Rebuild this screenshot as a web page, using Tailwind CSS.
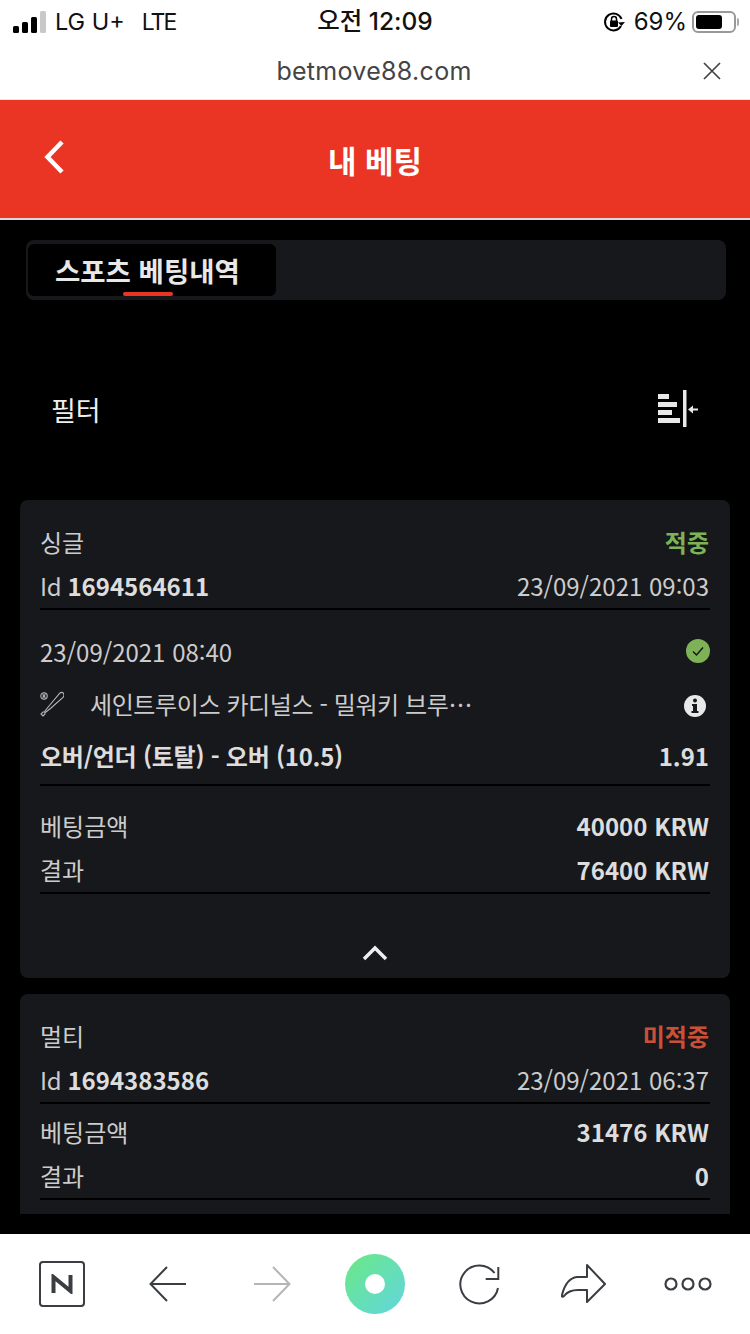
<!DOCTYPE html>
<html lang="ko">
<head>
  <meta charset="UTF-8" />
  <meta name="viewport" content="width=device-width, initial-scale=1.0"/>
  <title>내 베팅</title>
  <script src="https://cdn.jsdelivr.net/npm/@tailwindcss/browser@4"></script>
</head>
<body class="w-[750px] h-[1334px] overflow-hidden bg-black font-['Noto_Sans_CJK_KR','Noto_Sans',sans-serif]">
  <div class="flex flex-col h-[1334px]">

    <!-- Status bar -->
    <div class="h-[44px] bg-white flex items-center justify-between pl-[13px] pr-[11px] font-['Inter','Noto_Sans_CJK_KR',sans-serif] text-[#111] text-[23px]">
      <div class="flex items-center w-[240px]">
        <svg width="34" height="22" viewBox="0 0 34 22" class="mr-[8px]">
          <rect x="0" y="15" width="6" height="7" rx="1.5" fill="#000"/>
          <rect x="9" y="11" width="6" height="11" rx="1.5" fill="#000"/>
          <rect x="18" y="6" width="6" height="16" rx="1.5" fill="#000"/>
          <rect x="27" y="0" width="6" height="22" rx="1.5" fill="#c8c8c8"/>
        </svg>
        <span class="text-[23.5px]">LG U+</span>
        <span class="ml-[17px] tracking-[-2px]">LTE</span>
      </div>
      <div class="font-medium text-[24.5px] -mt-[1px] mr-[2px]">오전 12:09</div>
      <div class="flex items-center justify-end w-[240px]">
        <svg width="22" height="22" viewBox="0 0 22 22" class="mr-[9px]" fill="none">
          <path d="M18 15a8.500 8.500 0 1 1 .5-7" stroke="#000" stroke-width="2"/>
          <path d="M15 11.500l3.500 3.500 3.500-4z" fill="#000"/>
          <rect x="7" y="9.500" width="8" height="6.500" rx="1" fill="#000"/>
          <path d="M8.500 10V8a2.500 2.500 0 0 1 5 0v2" stroke="#000" stroke-width="1.500"/>
        </svg>
        <span class="mr-[5px] text-[24px]">69%</span>
        <div class="w-[44px] h-[22px] rounded-[6px] border-2 border-[#999] p-[2px]">
          <div class="w-[26px] h-full bg-black rounded-[3px]"></div>
        </div>
        <div class="w-[2px] h-[8px] bg-[#aaa] ml-[1px] rounded-r"></div>
      </div>
    </div>

    <!-- Url bar -->
    <div class="h-[56px] bg-white relative flex items-center justify-center pr-[2px] text-[#444] text-[25px] font-['Inter',sans-serif] border-b border-[#e8e8e8]">
      <span class="tracking-[0.3px]">betmove88.com</span>
      <svg width="18" height="18" viewBox="0 0 18 18" class="absolute right-[29px] top-[18px]" stroke="#444" stroke-width="1.700" fill="none"><path d="M1 1l16 16M17 1L1 17"/></svg>
    </div>

    <!-- Header -->
    <div class="h-[120px] bg-[#ea3524] border-b-2 border-[#d8d8d8] relative flex items-center justify-center text-white text-[31px] font-bold">
      <svg width="22" height="34" viewBox="0 0 22 34" class="absolute left-[44px] top-[40px]" fill="none" stroke="#fff" stroke-width="4.500"><path d="M18 2L3.500 17 18 32"/></svg>
      <span class="mt-[3px]">내 베팅</span>
    </div>

    <!-- Content -->
    <div class="flex-1 overflow-hidden bg-black">
      <div class="ml-[26px] w-[700px] mt-[20px] h-[60px] rounded-[8px] bg-[#17181c] p-[2px] pt-[4px]">
        <div class="relative w-[248px] h-[52px] rounded-[6px] bg-black flex items-center pl-[27px] pt-[2px] text-[#e8e8e8] text-[27.500px] font-bold">
          스포츠 베팅내역
          <div class="absolute left-[95px] bottom-0 w-[50px] h-[4px] rounded-sm bg-[#ea3524]"></div>
        </div>
      </div>

      <div class="h-[200px] flex items-center justify-between pt-[21px] pl-[51px] pr-[52px]">
        <span class="text-[#eee] text-[27px]">필터</span>
        <svg width="40" height="38" viewBox="0 0 40 38" class="-mt-[3px]" fill="#e8e8e8">
          <rect x="0" y="4" width="11" height="5"/>
          <rect x="0" y="12" width="19" height="5"/>
          <rect x="0" y="20" width="14" height="5"/>
          <rect x="0" y="28" width="22" height="5"/>
          <rect x="25" y="0" width="3.500" height="37"/>
          <path d="M30 19.500l5-4v3h5v2h-5v3z"/>
        </svg>
      </div>

      <!-- Card 1 -->
      <div class="mx-[20px] h-[478px] rounded-[8px] bg-[#17181c] px-[20px] text-[#ddd] text-[24px]">
        <div class="flex justify-between items-center h-[44px] pt-[20px] pr-[1px] box-content">
          <span class="text-[#ccc]">싱글</span>
          <span class="font-bold text-[#7db356]">적중</span>
        </div>
        <div class="flex justify-between items-center h-[46px] pr-[1px] border-b-2 border-black">
          <span><span class="text-[#ccc] tracking-[-0.4px]">Id </span><b>1694564611</b></span>
          <span class="text-[#ccc]">23/09/2021 09:03</span>
        </div>

        <div class="flex justify-between items-center h-[44px] mt-[20px]">
          <span class="text-[#ccc]">23/09/2021 08:40</span>
          <svg width="24" height="24" viewBox="0 0 24 24" class="-mt-[2px]"><circle cx="12" cy="12" r="12" fill="#7db356"/><path d="M7 12.500l3.500 3.500L17 8.500" fill="none" stroke="#17181c" stroke-width="1.500"/></svg>
        </div>
        <div class="flex justify-between items-center h-[59px]">
          <div class="flex items-center">
            <svg width="24" height="26" viewBox="0 0 24 26" fill="none" stroke="#b8b8b8" stroke-width="1.100">
              <circle cx="4" cy="5" r="3.200"/><path d="M2.800 2.500c.8 1.500.8 3.500 0 5M5.200 2.500c-.8 1.500-.8 3.500 0 5"/>
              <path d="M19.800 2.200C21.200.9 23 1.200 23.500 2.500 24.200 3.800 24 5.400 23 6.400L11 17l-5 4-1 .5V23l-2 2-2-2 2-2h1.500l.5-1 4-5z"/>
            </svg>
            <span class="ml-[26px] text-[#ccc] tracking-[-0.4px] whitespace-nowrap">세인트루이스 카디널스 - 밀워키 브루…</span>
          </div>
          <svg width="22" height="22" viewBox="0 0 22 22" class="mr-[4px] mt-[5px]"><circle cx="11" cy="11" r="11" fill="#e8e8e8"/><circle cx="11" cy="5.500" r="2" fill="#17181c"/><path d="M8 9h5v7h1.500v2h-7v-2H9v-5H8z" fill="#17181c"/></svg>
        </div>
        <div class="flex justify-between items-center h-[46px] pb-[5px] pr-[1px] border-b-2 border-black box-content font-bold">
          <span class="tracking-[-0.25px]">오버/언더 (토탈) - 오버 (10.5)</span>
          <span>1.91</span>
        </div>

        <div class="flex justify-between items-center h-[44px] pr-[1px] mt-[18px]">
          <span class="text-[#ccc]">베팅금액</span>
          <b>40000 KRW</b>
        </div>
        <div class="flex justify-between items-center h-[46px] pb-[1px] pr-[1px] border-b-2 border-black">
          <span class="text-[#ccc]">결과</span>
          <b>76400 KRW</b>
        </div>
        <div class="flex justify-center mt-[51px]">
          <svg width="26" height="16" viewBox="0 0 26 16" fill="none" stroke="#eee" stroke-width="3.500"><path d="M2 14L13 3l11 11"/></svg>
        </div>
      </div>

      <!-- Card 2 -->
      <div class="mx-[20px] mt-[16px] h-[220px] overflow-hidden rounded-t-[8px] bg-[#17181c] px-[20px] text-[#ddd] text-[24px]">
        <div class="flex justify-between items-center h-[44px] pr-[1px] mt-[20px]">
          <span class="text-[#ccc]">멀티</span>
          <span class="font-bold text-[#cc5038]">미적중</span>
        </div>
        <div class="flex justify-between items-center h-[46px] pr-[1px] border-b-2 border-black">
          <span><span class="text-[#ccc] tracking-[-0.4px]">Id </span><b>1694383586</b></span>
          <span class="text-[#ccc]">23/09/2021 06:37</span>
        </div>
        <div class="flex justify-between items-center h-[44px] pr-[1px] mt-[6px]">
          <span class="text-[#ccc]">베팅금액</span>
          <b>31476 KRW</b>
        </div>
        <div class="flex justify-between items-center h-[46px] pr-[1px] border-b-2 border-black">
          <span class="text-[#ccc]">결과</span>
          <b>0</b>
        </div>
      </div>
    </div>

    <!-- Bottom toolbar -->
    <div class="h-[100px] bg-white flex items-center pl-[39px]">
      <div class="w-[46px] h-[46px] rounded-[4px] border-2 border-[#3a3d42] flex items-center justify-center">
        <svg width="22" height="20" viewBox="0 0 22 20" fill="none" stroke="#3a3d42" stroke-width="4"><path d="M2.500 19V3l17 14V1"/></svg>
      </div>
      <svg width="38" height="36" viewBox="0 0 38 36" fill="none" stroke="#3a3d42" stroke-width="2" class="ml-[64px]"><path d="M37 18H2M18 1L1.500 18 18 35"/></svg>
      <svg width="38" height="36" viewBox="0 0 38 36" fill="none" stroke="#b5b5b5" stroke-width="2" class="ml-[66px]"><path d="M1 18h35M20 1l16.500 17L20 35"/></svg>
      <div class="w-[60px] h-[60px] ml-[54px] rounded-full bg-gradient-to-br from-[#6ce87f] to-[#62d5de] flex items-center justify-center">
        <div class="w-[20px] h-[20px] rounded-full bg-white"></div>
      </div>
      <svg width="42" height="42" viewBox="0 0 42 42" fill="none" stroke="#3a3d42" stroke-width="2" class="ml-[53px]"><path d="M40 25A19 19 0 1 1 36.500 10"/><path d="M40.300 4v12H27.700"/></svg>
      <svg width="46" height="40" viewBox="0 0 46 40" fill="none" stroke="#3a3d42" stroke-width="2" stroke-linejoin="round" class="ml-[61px]"><path d="M26 1l18 19-18 18V26h-9c-6 0-11 2-14 6-1 1-3 1-2-1 2-8 6-17 15-18h10z"/></svg>
      <svg width="48" height="16" viewBox="0 0 48 16" fill="none" stroke="#3a3d42" stroke-width="2.200" class="ml-[57px]"><circle cx="7" cy="8" r="5.500"/><circle cx="24" cy="8" r="5.500"/><circle cx="41" cy="8" r="5.500"/></svg>
    </div>
  </div>
</body>
</html>
